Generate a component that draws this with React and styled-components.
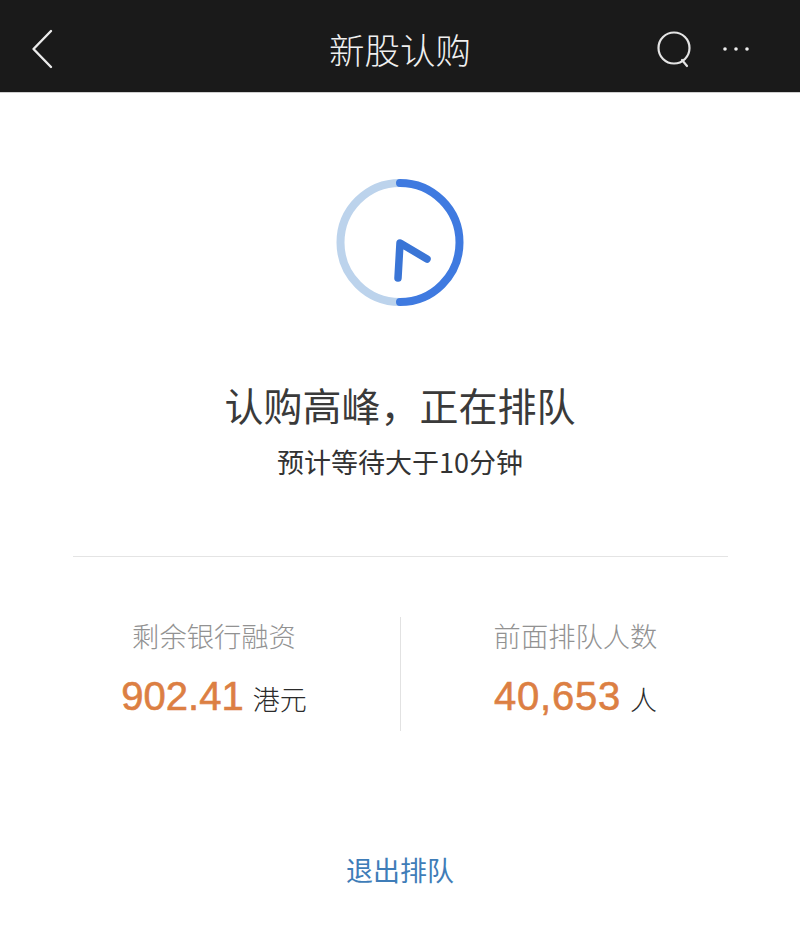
import React from "react";
import styled, { createGlobalStyle } from "styled-components";

const Global = createGlobalStyle`
  html, body { margin: 0; padding: 0; background: #fff; }
  body { font-family: "Liberation Sans", "Noto Sans CJK SC", sans-serif; }
`;
const cjk = `"Noto Sans CJK SC", "Liberation Sans", sans-serif`;

const Page = styled.div`
  width: 800px; height: 944px; display: flex; flex-direction: column; overflow: hidden; background: #fff;
`;
const NavBar = styled.header`
  height: 93px; flex: none; box-sizing: border-box; padding: 5px 20px 0;
  background: #1a1a1a; border-bottom: 1px solid #cfcfcf;
  display: grid; grid-template-columns: 1fr auto 1fr; align-items: center;
`;
const NavTitle = styled.h1`
  margin: 0; font: 300 35.5px/1 ${cjk}; color: #f0f0f0;
`;
const NavLeft = styled.div`display: flex; align-items: center;`;
const NavRight = styled.div`
  display: flex; align-items: center; justify-content: flex-end; gap: 30px; padding-right: 30px;
`;
const Status = styled.section`
  display: flex; flex-direction: column; align-items: center; padding-top: 85px;
`;
const Clock = styled.svg`width: 130px; height: 130px; display: block;`;
const Headline = styled.h2`
  margin: 71px 0 0; font: 400 39px/50px ${cjk}; color: #3a3a3a;
`;
const Sub = styled.p`
  margin: 15px 0 0; font: 400 27px/36px ${cjk}; color: #333;
`;
const Rule = styled.hr`
  margin: 76px 72px 0 73px; border: 0; height: 1px; background: #e4e4e4;
`;
const Stats = styled.section`
  margin-top: 60px; padding-left: 28px; height: 114px;
  display: grid; grid-template-columns: 372px 1px 349px;
`;
const Stat = styled.div`
  display: flex; flex-direction: column; align-items: center;
`;
const VLine = styled.div`background: #e2e2e2;`;
const StatLabel = styled.div`
  font: 300 27.3px/36px ${cjk}; color: #929292;
`;
const StatValue = styled.div`
  margin-top: 20px; display: flex; align-items: baseline; gap: 9px;
`;
const Num = styled.span`
  font: 400 40px/46px "Liberation Sans", sans-serif; color: #dc7f43;
  -webkit-text-stroke: 0.6px #dc7f43;
  letter-spacing: ${(p) => p.$spread || 0}px;
`;
const Unit = styled.span`
  font: 300 27px/46px ${cjk}; color: #2b2b2b;
`;
const Exit = styled.button`
  margin: 117px auto 0; padding: 0; border: 0; background: none; display: block;
  font: 400 27px/44px ${cjk}; color: #3f7db8;
`;

export default function App() {
  return (
    <Page>
      <Global />
      <NavBar>
        <NavLeft>
          <svg width="36" height="44" viewBox="0 0 36 44" fill="none" stroke="#ececec" strokeWidth="2.4" strokeLinecap="round" strokeLinejoin="round">
            <path d="M31 4 L13.5 22 L31 40" />
          </svg>
        </NavLeft>
        <NavTitle>新股认购</NavTitle>
        <NavRight>
          <svg width="36" height="38" viewBox="0 0 36 38" fill="none" stroke="#e4e4e4" strokeWidth="2.2" strokeLinecap="round">
            <circle cx="18" cy="18" r="15.5" />
            <path d="M26 30 L31 36" />
          </svg>
          <svg width="28" height="6" viewBox="0 0 28 6" fill="#eee">
            <circle cx="3" cy="3" r="1.8" />
            <circle cx="14" cy="3" r="1.8" />
            <circle cx="25" cy="3" r="1.8" />
          </svg>
        </NavRight>
      </NavBar>
      <Status>
        <Clock viewBox="0 0 130 130" fill="none">
          <path d="M65 5 A59.5 59.5 0 0 0 65 124" stroke="#bcd3ec" strokeWidth="8" />
          <path d="M65 5 A59.5 59.5 0 0 1 65 124" stroke="#3f7ae0" strokeWidth="8" strokeLinecap="round" />
          <path d="M63 100 L65 65 L92 81" stroke="#3a75d6" strokeWidth="7.5" strokeLinecap="round" strokeLinejoin="round" />
        </Clock>
        <Headline>认购高峰，正在排队</Headline>
        <Sub>预计等待大于10分钟</Sub>
      </Status>
      <Rule />
      <Stats>
        <Stat>
          <StatLabel>剩余银行融资</StatLabel>
          <StatValue><Num>902.41</Num><Unit>港元</Unit></StatValue>
        </Stat>
        <VLine />
        <Stat>
          <StatLabel>前面排队人数</StatLabel>
          <StatValue><Num $spread={0.8}>40,653</Num><Unit>人</Unit></StatValue>
        </Stat>
      </Stats>
      <Exit>退出排队</Exit>
    </Page>
  );
}
